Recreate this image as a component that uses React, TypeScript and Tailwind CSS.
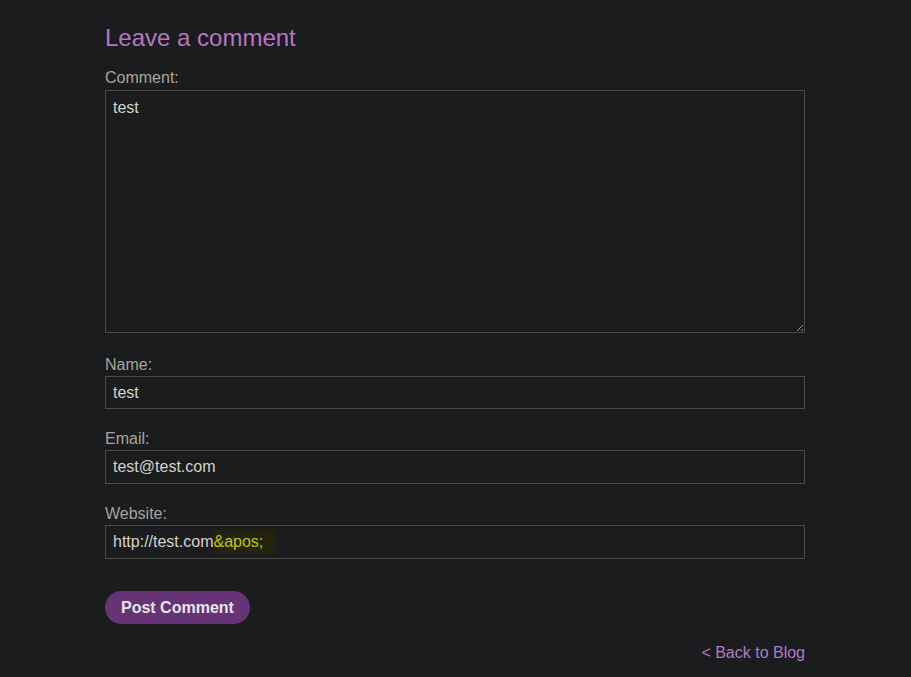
import React from "react";

export default function App() {
  const font = { fontFamily: '"Liberation Sans", Arial, sans-serif' };
  return (
    <div className="min-h-[677px] w-full bg-[#1b1c1e]" style={font}>
      <div className="ml-[105px] w-[700px] pt-[23px] pb-[14px]">
        <h2 className="text-[24px] leading-[30px] text-[#b477c4] font-normal">Leave a comment</h2>
        <form className="mt-[15px] flex flex-col" onSubmit={(e) => e.preventDefault()}>
          <label className="block text-[16px] leading-[20px] text-[#a8a49c]">Comment:</label>
          <textarea
            readOnly
            defaultValue="test"
            className="mt-[2px] block h-[243px] w-[700px] border border-[#4a4a4a] bg-[#1b1c1e] px-[7px] py-[6px] text-[16px] leading-[22px] text-[#d6d2ca] outline-none"
            style={font}
          />
          <label className="mt-[22px] block text-[16px] leading-[20px] text-[#a8a49c]">Name:</label>
          <input
            readOnly
            defaultValue="test"
            className="mt-[1px] block h-[33px] w-[700px] border border-[#4a4a4a] bg-[#1b1c1e] px-[7px] text-[16px] text-[#d6d2ca] outline-none"
            style={font}
          />
          <label className="mt-[20px] block text-[16px] leading-[20px] text-[#a8a49c]">Email:</label>
          <input
            readOnly
            defaultValue="test@test.com"
            className="mt-[1px] block h-[34px] w-[700px] border border-[#4a4a4a] bg-[#1b1c1e] px-[7px] text-[16px] text-[#d6d2ca] outline-none"
            style={font}
          />
          <label className="mt-[20px] block text-[16px] leading-[20px] text-[#a8a49c]">Website:</label>
          <div className="mt-[1px] flex h-[34px] w-[700px] items-center border border-[#4a4a4a] bg-[#1b1c1e] px-[7px] text-[16px] text-[#d6d2ca]">
            <span>http://test.com</span>
            <span className="bg-[#21230f] pr-[12px] text-[#c9c400]">&amp;apos;</span>
          </div>
          <div className="mt-[32px]">
            <button
              type="submit"
              className="h-[33px] rounded-full bg-[#663377] px-[16px] text-[16px] font-bold text-[#e8e4ec]"
              style={font}
            >
              Post Comment
            </button>
          </div>
        </form>
        <div className="mt-[19px] flex justify-end">
          <a href="#" className="text-[16px] leading-[20px] text-[#b477c4]">&lt; Back to Blog</a>
        </div>
      </div>
    </div>
  );
}
